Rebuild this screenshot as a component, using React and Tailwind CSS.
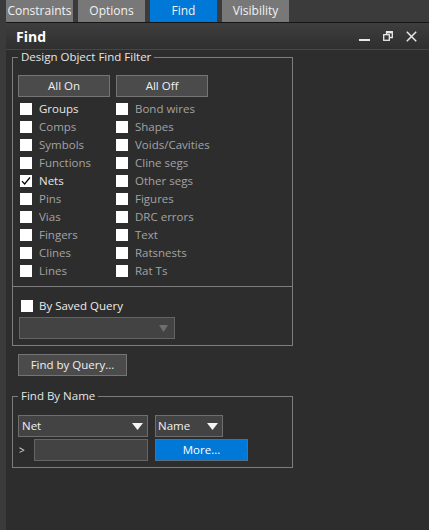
import React from 'react';

const font = { fontFamily: '"Open Sans", "Noto Sans", sans-serif' };

function Tab({ label, active }) {
  return (
    <div
      className={`flex h-[22px] w-[67px] items-center justify-center text-[12px] text-[#f2f2f2] ${
        active ? 'bg-[#0078d7]' : 'bg-[#787878]'
      }`}
    >
      {label}
    </div>
  );
}

function Check({ label, checked, bright }) {
  return (
    <div className="flex h-[18px] items-center gap-[7px]">
      <div className="ml-[2px] flex h-[12px] w-[12px] items-center justify-center bg-white">
        {checked && (
          <svg width="10" height="10" viewBox="0 0 10 10">
            <path d="M1 5.2 L3.6 8 L9 1.5" fill="none" stroke="#000" strokeWidth="1.2" />
          </svg>
        )}
      </div>
      <span className={`text-[11.5px] leading-none ${bright ? 'text-[#e6e6e6]' : 'text-[#a3a3a3]'}`}>{label}</span>
    </div>
  );
}

function Caret({ color, w = 11, h = 7 }) {
  return (
    <svg width={w} height={h} viewBox={`0 0 ${w} ${h}`}>
      <polygon points={`0,0 ${w},0 ${w / 2},${h}`} fill={color} />
    </svg>
  );
}

const leftCol = [
  ['Groups', false, true],
  ['Comps'],
  ['Symbols'],
  ['Functions'],
  ['Nets', true, true],
  ['Pins'],
  ['Vias'],
  ['Fingers'],
  ['Clines'],
  ['Lines'],
];

const rightCol = ['Bond wires', 'Shapes', 'Voids/Cavities', 'Cline segs', 'Other segs', 'Figures', 'DRC errors', 'Text', 'Ratsnests', 'Rat Ts'];

export default function App() {
  return (
    <div className="flex h-[530px] w-[429px] flex-col overflow-hidden bg-[#3b3b3b] select-none" style={font}>
      {/* tabs */}
      <div className="flex h-[22px] gap-[5px] pl-[6px]">
        <Tab label="Constraints" />
        <Tab label="Options" />
        <Tab label="Find" active />
        <Tab label="Visibility" />
      </div>
      <div className="ml-[6px] h-px bg-[#161616]" />

      <div className="flex flex-1">
        <div className="w-[6px] bg-[#3b3b3b]" />
        <div className="flex flex-1 flex-col bg-[#2d2d2d]">
          {/* header */}
          <div className="flex h-[27px] items-center justify-between border-b border-[#474747] bg-gradient-to-b from-[#3e3e3e] to-[#2f2f2f] pl-[10px] pr-[12px]">
            <span className="text-[14px] font-bold text-white">Find</span>
            <div className="flex items-center gap-[13px]">
              <svg width="11" height="11" viewBox="0 0 11 11">
                <rect x="0" y="8" width="11" height="2" fill="#e8e8e8" />
              </svg>
              <svg width="10" height="10" viewBox="0 0 10 10" fill="none" stroke="#e8e8e8" strokeWidth="1.3">
                <rect x="0.7" y="3.7" width="5.6" height="5.6" />
                <path d="M3.5 3.5 V0.7 H9.3 V6.5 H6.5" />
                <path d="M3.5 1.6 H9.3" strokeWidth="1.6" />
              </svg>
              <svg width="11" height="11" viewBox="0 0 11 11" stroke="#e8e8e8" strokeWidth="1.5">
                <path d="M0.8 0.8 L10.2 10.2 M10.2 0.8 L0.8 10.2" />
              </svg>
            </div>
          </div>

          {/* body */}
          <div className="flex flex-col pl-[6px]">
            <fieldset className="w-[281px] border border-[#7d7d7d] p-0">
              <legend className="ml-[5px] px-[3px] text-[11.5px] leading-[14px] text-[#e6e6e6]">Design Object Find Filter</legend>
              <div className="border-b border-[#7d7d7d] px-[5px] pt-[11px] pb-[6px]">
                <div className="flex gap-[6px]">
                  <button className="h-[22px] w-[92px] border border-[#747474] bg-[#4b4b4b] text-[11.5px] text-[#f0f0f0]">All On</button>
                  <button className="h-[22px] w-[92px] border border-[#747474] bg-[#4b4b4b] text-[11.5px] text-[#f0f0f0]">All Off</button>
                </div>
                <div className="mt-[3px] grid grid-cols-[96px_1fr]">
                  <div className="flex flex-col">
                    {leftCol.map(([l, c, b]) => (
                      <Check key={l} label={l} checked={c} bright={b} />
                    ))}
                  </div>
                  <div className="flex flex-col">
                    {rightCol.map((l) => (
                      <Check key={l} label={l} />
                    ))}
                  </div>
                </div>
              </div>
              <div className="px-[6px] pt-[12px] pb-[6px]">
                <div className="flex h-[14px] items-center gap-[6px]">
                  <div className="ml-[2px] h-[12px] w-[12px] bg-white" />
                  <span className="text-[11.5px] leading-none text-[#ececec]">By Saved Query</span>
                </div>
                <div className="mt-[4px] flex h-[22px] w-[156px] items-center justify-end border border-[#646464] bg-[#434343] pr-[6px]">
                  <Caret color="#6e6e6e" w={9} h={7} />
                </div>
              </div>
            </fieldset>

            <button className="mt-[8px] ml-[6px] h-[22px] w-[109px] border border-[#747474] bg-[#4b4b4b] text-[11.5px] text-[#f0f0f0]">
              Find by Query...
            </button>

            <fieldset className="mt-[13px] w-[281px] border border-[#7d7d7d] p-0">
              <legend className="ml-[5px] px-[3px] text-[11.5px] leading-[14px] text-[#e6e6e6]">Find By Name</legend>
              <div className="px-[5px] pt-[12px] pb-[6px]">
                <div className="flex gap-[7px]">
                  <div className="flex h-[22px] w-[130px] items-center justify-between border border-[#6e6e6e] bg-[#434343] pr-[4px] pl-[3px]">
                    <span className="text-[11.5px] text-[#f0f0f0]">Net</span>
                    <Caret color="#f5f5f5" />
                  </div>
                  <div className="flex h-[22px] w-[68px] items-center justify-between border border-[#6e6e6e] bg-[#434343] pr-[4px] pl-[2px]">
                    <span className="text-[11.5px] text-[#f0f0f0]">Name</span>
                    <Caret color="#f5f5f5" />
                  </div>
                </div>
                <div className="mt-[2px] flex items-center">
                  <span className="w-[16px] pl-[1px] text-[10px] text-[#e0e0e0]">&gt;</span>
                  <div className="h-[22px] w-[114px] border border-[#666] bg-[#434343]" />
                  <button className="ml-[7px] h-[22px] w-[93px] border border-[#5a6e80] bg-[#0078d7] text-[11.5px] text-white">More...</button>
                </div>
              </div>
            </fieldset>
          </div>
        </div>
      </div>
    </div>
  );
}
